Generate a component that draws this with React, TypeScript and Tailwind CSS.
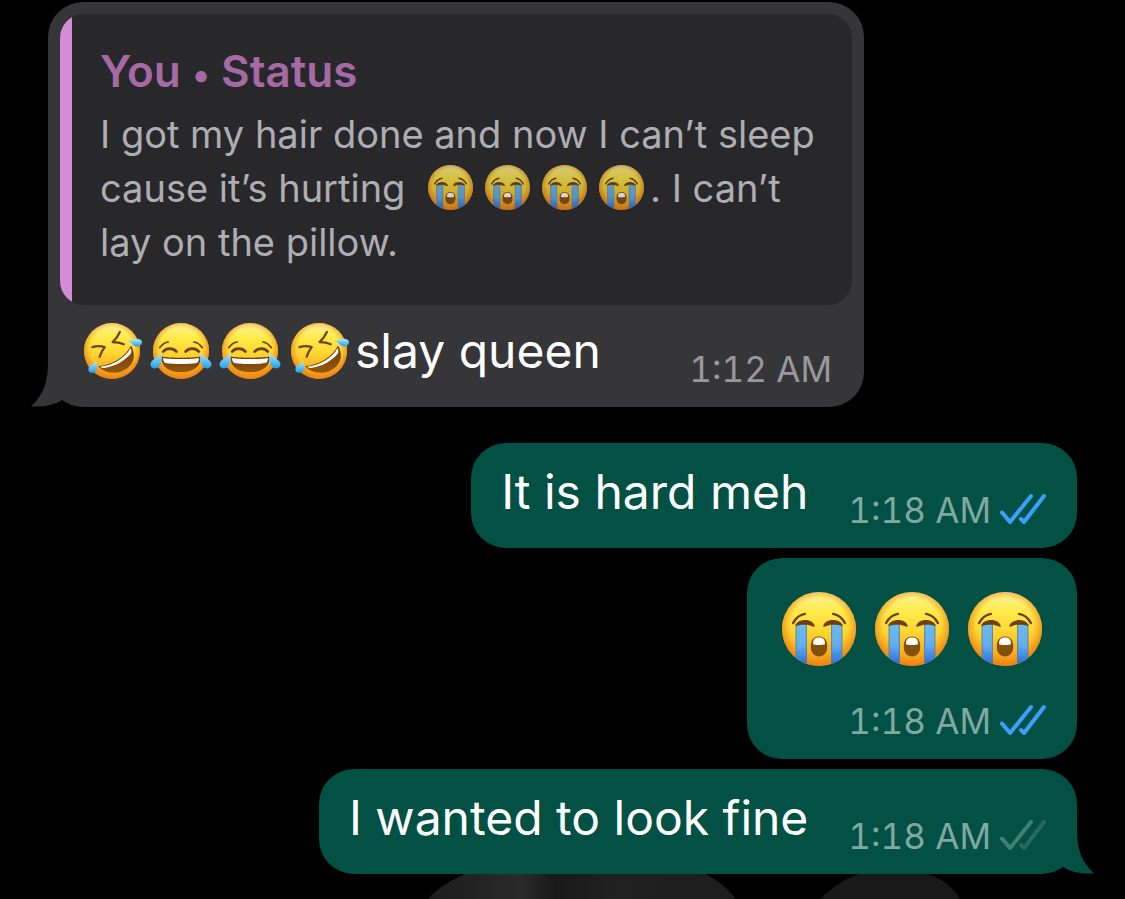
import React from "react";
import clsx from "clsx";

function EmojiDefs() {
  return (
    <svg className="absolute size-0" aria-hidden="true">
      <defs>
        <linearGradient id="face" x1="0" y1="0" x2="0" y2="1">
          <stop offset="0" stopColor="#fff39a" />
          <stop offset="0.25" stopColor="#ffeb4e" />
          <stop offset="0.55" stopColor="#fdd530" />
          <stop offset="1" stopColor="#f7921c" />
        </linearGradient>
        <radialGradient id="rim" cx="0.5" cy="0.47" r="0.53">
          <stop offset="0.72" stopColor="#f28c13" stopOpacity="0" />
          <stop offset="1" stopColor="#ea7d10" stopOpacity="0.85" />
        </radialGradient>
        <linearGradient id="stream" x1="0" y1="0" x2="0" y2="1">
          <stop offset="0" stopColor="#6db9f0" />
          <stop offset="0.5" stopColor="#62aef2" />
          <stop offset="1" stopColor="#2668d8" />
        </linearGradient>
        <linearGradient id="drop" x1="0" y1="0" x2="0" y2="1">
          <stop offset="0" stopColor="#b5eafb" />
          <stop offset="1" stopColor="#1f9fe8" />
        </linearGradient>
        <linearGradient id="mouth" x1="0" y1="0" x2="0" y2="1">
          <stop offset="0" stopColor="#6b3a06" />
          <stop offset="1" stopColor="#95590c" />
        </linearGradient>
        <clipPath id="faceClip">
          <circle cx="50" cy="50" r="50" />
        </clipPath>
      </defs>
    </svg>
  );
}

function Face() {
  return (
    <>
      <circle cx="50" cy="50" r="50" fill="url(#face)" />
      <circle cx="50" cy="50" r="50" fill="url(#rim)" />
    </>
  );
}

function Sob({ className }: { className: string }) {
  return (
    <svg viewBox="0 0 100 100" role="img" aria-label="😭" className={clsx("shrink-0 overflow-visible", className)}>
      <Face />
      <g clipPath="url(#faceClip)">
        <path d="M19 44H33V100H19ZM67 44H81V100H67Z" fill="url(#stream)" stroke="#4c7f96" strokeWidth="1.2" />
      </g>
      <path
        d="M15 42C18 36 23 31 31 29.500M85 42C82 36 77 31 69 29.500"
        fill="none"
        stroke="#70400a"
        strokeWidth="3.200"
        strokeLinecap="round"
      />
      <path d="M18 46C20 36 40 35 44 45C45 48 42 47 40 46C34 43 26 43 18 46Z" fill="#70400a" />
      <path d="M82 46C80 36 60 35 56 45C55 48 58 47 60 46C66 43 74 43 82 46Z" fill="#70400a" />
      <rect x="39" y="60" width="22" height="27" rx="10.500" fill="#84500d" />
      <path d="M42 70.500C41.500 64 45 61.500 50 61.500S58.500 64 58 70.500C56 72 44 72 42 70.500Z" fill="#fff" />
    </svg>
  );
}

function Joy({ className }: { className: string }) {
  return (
    <svg viewBox="0 0 100 100" role="img" aria-label="😂" className={clsx("shrink-0 overflow-visible", className)}>
      <Face />
      <g fill="none" stroke="#70400a" strokeLinecap="round">
        <path d="M12 44C16 39 20 35 27 34M88 44C84 39 80 35 73 34" strokeWidth="3" />
        <path d="M18 51C24 44 36 44 42 51M58 51C64 44 76 44 82 51" strokeWidth="4.500" />
      </g>
      <path d="M15 60C30 63 70 63 85 60C86 79 71 88 50 88S14 79 15 60Z" fill="url(#mouth)" />
      <path d="M18 62.500C32 65 68 65 82 62.500C82 66 81 70 78 71.500C62 74 38 74 22 71.500C19 70 18 66 18 62.500Z" fill="#fff" />
      <path d="M15 53C17 64 15 80 5 81C-5 82 -7 73 -1 67C5 61 11 59 15 53Z" fill="url(#drop)" />
      <path d="M85 53C83 64 85 80 95 81C105 82 107 73 101 67C95 61 89 59 85 53Z" fill="url(#drop)" />
    </svg>
  );
}

function Rofl({ className }: { className: string }) {
  return (
    <svg viewBox="0 0 100 100" role="img" aria-label="🤣" className={clsx("shrink-0 overflow-visible", className)}>
      <Face />
      <g fill="none" stroke="#70400a" strokeWidth="4" strokeLinecap="round" strokeLinejoin="round">
        <path d="M15 43C22 41 30 41 37 43C33 48 30 54 28 60" />
        <path d="M64 16C61 23 57 29 51 34C58 34 65 35 71 38" />
      </g>
      <path d="M25 77C49 75 75 60 84 40C95 60 87 78 68 86C52 92 34 88 25 77Z" fill="url(#mouth)" />
      <path d="M29 78C51 76 74 62 83 45C85 48 85 51 84 54C74 67 56 77 38 80C35 81 31 80 29 78Z" fill="#fff" />
      <path d="M79 33C85 29 95 26 101 30C107 34 102 42 95 42C88 42 86 35 79 33Z" fill="url(#drop)" />
      <path d="M21 68C23 74 26 82 21 87C16 91 7 89 8 82C9 75 17 74 21 68Z" fill="url(#drop)" />
    </svg>
  );
}

function Ticks({ read }: { read: boolean }) {
  return (
    <svg
      viewBox="0 0 48 34"
      fill="none"
      strokeWidth="4"
      strokeLinecap="round"
      strokeLinejoin="round"
      role="img"
      aria-label={read ? "Read" : "Delivered"}
      className="mb-1 h-[34px] w-12 shrink-0"
    >
      <path d="M22 27L25 30L45 4" stroke={read ? "#3c9ffb" : "#28695f"} />
      <path d="M3 20.500L11 30L32 4" stroke={read ? "#3c9ffb" : "#437e74"} />
    </svg>
  );
}

function Tail({ className }: { className: string }) {
  return (
    <svg viewBox="0 0 53 44" aria-hidden="true" className={clsx("absolute bottom-0 h-11 w-[53px]", className)}>
      <path d="M17 0C17 20 12 32 0 43.500C12 44 24 42 31 37L53 30V0Z" fill="currentColor" />
    </svg>
  );
}

function SentTime({ read }: { read: boolean }) {
  return (
    <div className="flex items-end gap-2 self-end">
      <time className="text-[35px] leading-10 text-[#80a8a1] tabular-nums">1:18 AM</time>
      <Ticks read={read} />
    </div>
  );
}

function SentMessage({ text, read, last }: { text: string; read: boolean; last?: boolean }) {
  return (
    <div className="relative flex gap-10 rounded-[35px] bg-[#025144] px-[30px] pt-[19px] pb-[18px]">
      {last && <Tail className="-right-[17px] -scale-x-100 text-[#025144]" />}
      <p className="relative pb-2 text-[48px] leading-[60px] text-white">{text}</p>
      <SentTime read={read} />
    </div>
  );
}

function Backdrop() {
  return (
    <svg viewBox="0 0 560 40" aria-hidden="true" className="absolute bottom-0 left-[420px] h-10 w-[560px]">
      <defs>
        <linearGradient id="petal" x1="0" y1="0" x2="1" y2="0">
          <stop offset="0" stopColor="#1c1c1c" />
          <stop offset="0.3" stopColor="#2a2a2a" />
          <stop offset="0.42" stopColor="#191919" />
          <stop offset="0.6" stopColor="#212121" />
          <stop offset="1" stopColor="#1d1d1d" />
        </linearGradient>
      </defs>
      <path d="M8 40C18 28 38 16 60 10H278C290 18 304 24 316 40Z" fill="url(#petal)" />
      <path d="M400 40C412 28 428 18 446 12H500C520 18 534 28 540 40Z" fill="#191919" />
    </svg>
  );
}

export default function App() {
  return (
    <main className="relative flex min-h-screen flex-col overflow-hidden bg-black px-12 pt-0.5 pb-6 font-['Inter',sans-serif]">
      <EmojiDefs />
      <Backdrop />

      <div className="relative w-[816px] max-w-full self-start rounded-[35px] bg-[#363638] p-3">
        <Tail className="-left-[17px] text-[#363638]" />
        <blockquote className="relative overflow-hidden rounded-3xl bg-[#28282a]">
          <div className="border-l-12 border-[#d48bd8] pt-[30px] pb-9 pl-7">
            <h2 className="text-[44px] leading-[54px] font-semibold text-[#a569a5]">
              You <span className="text-[36px] leading-none">•</span> Status
            </h2>
            <p className="mt-[9px] text-[38px] leading-[54px] text-[#aeadb3]">
              I got my hair done and now I can’t sleep
              <br />
              cause it’s hurting{" "}
              <span className="mr-1.5 ml-3 inline-flex gap-3 align-[-8px] opacity-80">
                <Sob className="size-[45px]" />
                <Sob className="size-[45px]" />
                <Sob className="size-[45px]" />
                <Sob className="size-[45px]" />
              </span>
              . I can’t
              <br />
              lay on the pillow.
            </p>
          </div>
        </blockquote>
        <div className="relative flex justify-between pt-4 pr-5 pb-1.5 pl-6">
          <div className="flex items-center gap-2 pb-2">
            <span className="flex gap-[13px]">
              <Rofl className="size-14" />
              <Joy className="size-14" />
              <Joy className="size-14" />
              <Rofl className="size-14" />
            </span>
            <p className="text-[48px] leading-[60px] text-white">slay queen</p>
          </div>
          <time className="self-end text-[35px] leading-10 text-[#98989e] tabular-nums">1:12 AM</time>
        </div>
      </div>

      <div className="relative mt-9 flex flex-col items-end gap-2.5">
        <SentMessage text="It is hard meh" read />
        <div className="flex flex-col gap-[35px] rounded-[35px] bg-[#025144] px-[30px] pt-[34px] pb-[18px]">
          <div className="flex gap-[19px] px-[5px]">
            <Sob className="size-[74px]" />
            <Sob className="size-[74px]" />
            <Sob className="size-[74px]" />
          </div>
          <SentTime read />
        </div>
        <SentMessage text="I wanted to look fine" read={false} last />
      </div>
    </main>
  );
}
